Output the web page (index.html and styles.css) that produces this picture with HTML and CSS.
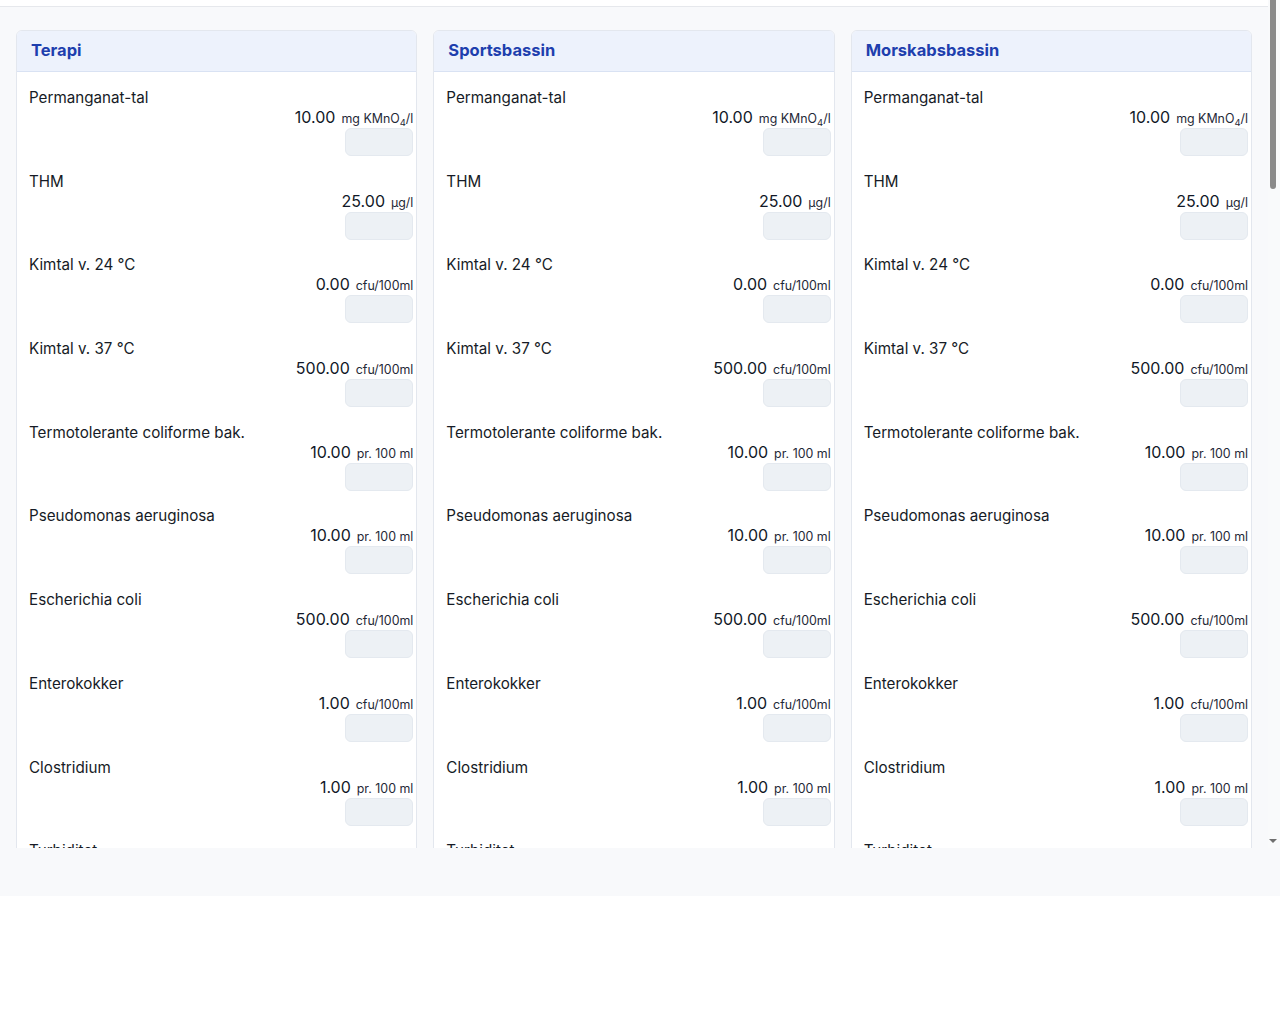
FILE: index.html
```html
<!DOCTYPE html>
<html lang="da">

<head>
    <meta charset="UTF-8">
    <meta name="viewport" content="width=device-width, initial-scale=1.0">
    <title>Grænseværdier</title>
    <link rel="stylesheet" href="styles.css">
</head>

<body>
    <div class="app">
        <div class="viewport">
            <div class="scroller">
                <div class="topbar"></div>
                <div class="pools" id="pools"></div>
            </div>
            <div class="scrollbar">
                <div class="scrollbar-thumb"></div>
                <div class="scrollbar-arrow"></div>
            </div>
        </div>
        <div class="footer"></div>
    </div>

    <script>
        const pools = ['Terapi', 'Sportsbassin', 'Morskabsbassin'];

        const params = [
            { name: 'Permanganat-tal', value: '10.00', unit: 'mg KMnO<sub>4</sub>/l' },
            { name: 'THM', value: '25.00', unit: 'µg/l' },
            { name: 'Kimtal v. 24 °C', value: '0.00', unit: 'cfu/100ml' },
            { name: 'Kimtal v. 37 °C', value: '500.00', unit: 'cfu/100ml' },
            { name: 'Termotolerante coliforme bak.', value: '10.00', unit: 'pr. 100 ml' },
            { name: 'Pseudomonas aeruginosa', value: '10.00', unit: 'pr. 100 ml' },
            { name: 'Escherichia coli', value: '500.00', unit: 'cfu/100ml' },
            { name: 'Enterokokker', value: '1.00', unit: 'cfu/100ml' },
            { name: 'Clostridium', value: '1.00', unit: 'pr. 100 ml' },
            { name: 'Turbiditet', value: '0.50', unit: 'FNU' },
            { name: 'pH', value: '7.60', unit: '' },
            { name: 'Frit klor', value: '2.00', unit: 'mg/l' },
            { name: 'Bundet klor', value: '1.00', unit: 'mg/l' },
            { name: 'Total klor', value: '3.00', unit: 'mg/l' },
            { name: 'Cyanursyre', value: '25.00', unit: 'mg/l' },
            { name: 'Nitrat', value: '20.00', unit: 'mg/l' },
            { name: 'Urea', value: '1.00', unit: 'mg/l' },
            { name: 'Temperatur', value: '34.00', unit: '°C' },
            { name: 'Redox', value: '750.00', unit: 'mV' },
            { name: 'Ledningsevne', value: '1500.00', unit: 'µS/cm' },
            { name: 'Klorid', value: '250.00', unit: 'mg/l' },
            { name: 'Jern', value: '0.10', unit: 'mg/l' },
            { name: 'Mangan', value: '0.05', unit: 'mg/l' },
            { name: 'Aluminium', value: '0.10', unit: 'mg/l' },
            { name: 'Legionella', value: '100.00', unit: 'cfu/l' },
            { name: 'Staphylococcus aureus', value: '10.00', unit: 'pr. 100 ml' },
            { name: 'Alkalinitet', value: '2.00', unit: 'mmol/l' },
            { name: 'Calciumhårdhed', value: '15.00', unit: '°dH' },
            { name: 'Bromat', value: '10.00', unit: 'µg/l' },
            { name: 'Chlorat', value: '30.00', unit: 'mg/l' },
            { name: 'Ozon', value: '0.05', unit: 'mg/l' },
            { name: 'Sulfat', value: '250.00', unit: 'mg/l' },
            { name: 'Fosfat', value: '0.01', unit: 'mg/l' },
            { name: 'Ammonium', value: '0.50', unit: 'mg/l' },
            { name: 'Nitrit', value: '0.10', unit: 'mg/l' },
            { name: 'TOC', value: '4.00', unit: 'mg/l' },
            { name: 'Kobber', value: '0.10', unit: 'mg/l' },
            { name: 'Nikkel', value: '0.02', unit: 'mg/l' },
            { name: 'Bly', value: '0.01', unit: 'mg/l' },
            { name: 'Arsen', value: '0.01', unit: 'mg/l' },
            { name: 'Fluorid', value: '1.50', unit: 'mg/l' },
            { name: 'Natrium', value: '175.00', unit: 'mg/l' },
            { name: 'Kalium', value: '10.00', unit: 'mg/l' },
            { name: 'Magnesium', value: '50.00', unit: 'mg/l' },
            { name: 'Calcium', value: '200.00', unit: 'mg/l' }
        ];

        const container = document.getElementById('pools');

        pools.forEach(pool => {
            const rows = params.map(p => `
                <div class="param">
                    <div class="param-name">${p.name}</div>
                    <div class="param-limit">
                        <span class="limit-value">${p.value}</span>
                        <span class="limit-unit">${p.unit}</span>
                    </div>
                    <input type="text" class="param-input">
                </div>`).join('');

            container.insertAdjacentHTML('beforeend', `
                <div class="pool-card">
                    <div class="pool-header">
                        <h2>${pool}</h2>
                    </div>
                    <div class="pool-body">${rows}</div>
                </div>`);
        });
    </script>
</body>

</html>
```

FILE: styles.css
```css
body {
    margin: 0;
    font-family: Inter, "Noto Sans", sans-serif;
    background-color: #fff;
    color: #1f2937;
}

.app {
    background-color: #f8f9fb;
}

.viewport {
    display: flex;
    height: 848px;
}

.scroller {
    flex: 1;
    overflow-y: auto;
    scrollbar-width: none;
}

/* drawn rail, the browser hides its own when photographed */
.scrollbar {
    width: 12px;
    display: flex;
    flex-direction: column;
    justify-content: space-between;
    background-color: #f9fafb;
}

.scrollbar-thumb {
    width: 6px;
    height: 189px;
    margin-left: 2px;
    background-color: #8a8a8a;
    border-radius: 0 0 3px 3px;
}

.scrollbar-arrow {
    width: 0;
    height: 0;
    margin: 0 0 5px 1px;
    border-left: 4px solid transparent;
    border-right: 4px solid transparent;
    border-top: 4px solid #6f6f6f;
}

.topbar {
    height: 6px;
    background-color: #fff;
    border-bottom: 1px solid #e6e8ec;
}

.pools {
    display: grid;
    grid-template-columns: repeat(3, 1fr);
    gap: 16px;
    padding: 23px 16px 16px;
}

.footer {
    height: 48px;
}

.pool-card {
    background-color: #fff;
    border: 1px solid #e3e7ee;
    border-radius: 6px;
    overflow: hidden;
}

.pool-header {
    background-color: #edf2fc;
    border-bottom: 1px solid #d9e2f3;
    padding: 7px 15px 9px 14px;
}

.pool-header h2 {
    margin: 0;
    font-size: 16.5px;
    line-height: 24px;
    font-weight: 700;
    color: #1e3fae;
}

.pool-body {
    padding: 16px 3px 0 12px;
}

.param {
    display: flex;
    flex-direction: column;
    align-items: flex-end;
    margin-bottom: 15.7px;
}

.param-name {
    align-self: stretch;
    font-size: 15.2px;
    line-height: 19px;
    color: #161b26;
}

.param-limit {
    display: flex;
    align-items: baseline;
    gap: 6px;
    height: 20px;
    line-height: 20px;
}

.limit-value {
    font-size: 16px;
    color: #111827;
}

.limit-unit {
    font-size: 12.4px;
    color: #1f2937;
}

.limit-unit sub {
    font-size: 9.5px;
    line-height: 0;
}

.param-input {
    box-sizing: border-box;
    width: 68px;
    height: 28px;
    margin-top: 1px;
    background-color: #edf1f5;
    border: 1px solid #e4e9ef;
    border-radius: 6px;
    font-family: inherit;
}
```
